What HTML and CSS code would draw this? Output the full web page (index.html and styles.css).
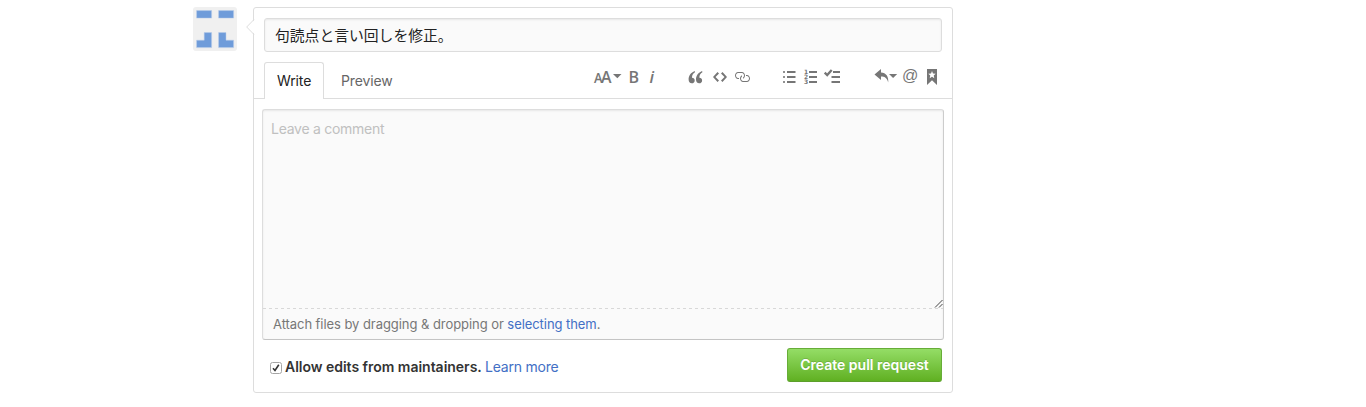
FILE: index.html
```html
<!DOCTYPE html>
<html lang="ja">
<head>
<meta charset="utf-8">
<title>Create pull request</title>
<link rel="stylesheet" href="styles.css">
</head>
<body>
<main class="page">
  <svg class="avatar" width="44" height="44" viewBox="0 0 44 44">
    <g fill="#6f9cda" stroke="#b9cde9" stroke-width=".5">
      <path d="M3.600 3.600h15v7.500h-15zM25.600 3.600h15v7.500h-15z"/>
      <path d="M11.200 25.600h7.400v15h-15v-7.400h7.600zM25.600 25.600H33v7.600h7.600v7.400h-15z"/>
    </g>
  </svg>
  <form class="bubble">
    <svg class="pointer" width="9" height="16" viewBox="0 0 9 16"><path d="M8.5 0v1L1 8l7.500 7v1H9V0z" fill="#fff"/><path d="M8 .5L.7 8 8 15.500" fill="none" stroke="#ddd"/></svg>
    <div class="title-field"><span class="title-text">句読点と言い回しを修正。</span></div>
    <div class="tabnav">
      <div class="tabs">
        <span class="tab selected"><span class="tab-write">Write</span></span>
        <span class="tab"><span class="tab-preview">Preview</span></span>
      </div>
      <div class="toolbar">
        <div class="group">
          <svg width="31" height="16" viewBox="0 0 31 16"><text class="glyph" x="0" y="14" font-size="14" textLength="8.500" lengthAdjust="spacingAndGlyphs">A</text><text class="glyph" x="7" y="14" font-size="16.500" textLength="10.500" lengthAdjust="spacingAndGlyphs">A</text><path d="M19 5h8.500l-4.200 4.200z"/></svg>
          <svg width="18" height="16" viewBox="0 0 18 16"><text class="glyph" x="3.600" y="14" font-size="16">B</text></svg>
          <svg width="17" height="16" viewBox="0 0 17 16"><text class="glyph italic" x="6.500" y="14" font-size="16.500">i</text></svg>
        </div>
        <div class="group quotes">
          <svg width="24" height="16" viewBox="0 0 24 16"><path d="M9.700 2C6 3.700 3.600 6.500 3.600 10.300c0 2.600 1.200 4 3.200 4 1.700 0 2.900-1.200 2.900-2.900S8.600 8.800 7 8.700C6.900 6.300 8 4.400 10 3.300z"/><path transform="translate(7.400)" d="M9.700 2C6 3.700 3.600 6.500 3.600 10.300c0 2.600 1.200 4 3.200 4 1.700 0 2.900-1.200 2.900-2.900S8.600 8.800 7 8.700C6.900 6.300 8 4.400 10 3.300z"/></svg>
          <svg width="22" height="16" viewBox="0 0 22 16"><g transform="translate(4)"><path d="M9.500 3L8 4.500 11.500 8 8 11.500 9.500 13 14 8 9.500 3zm-5 0L0 8l4.500 5L6 11.500 2.500 8 6 4.500 4.500 3z"/></g></svg>
          <svg width="23" height="16" viewBox="0 0 23 16"><g transform="translate(3)"><path d="M4 9h1v1H4c-1.500 0-3-1.690-3-3.500S2.550 3 4 3h4c1.450 0 3 1.690 3 3.500 0 1.410-.910 2.720-2 3.250V8.590c.580-.450 1-1.270 1-2.090C10 5.220 8.980 4 8 4H4c-.980 0-2 1.220-2 2.500S3 9 4 9zm9-3h-1v1h1c1 0 2 1.220 2 2.500S13.980 12 13 12H9c-.980 0-2-1.220-2-2.500 0-.830.420-1.640 1-2.090V6.250c-1.090.530-2 1.840-2 3.250C6 11.310 7.550 13 9 13h4c1.450 0 3-1.690 3-3.500S14.500 6 13 6z"/></g></svg>
        </div>
        <div class="group">
          <svg width="22" height="16" viewBox="0 0 22 16"><path opacity=".8" d="M5 2h2v2H5zm0 5h2v2H5zm0 5h2v2H5z"/><path d="M9 2h8.500v2H9zm0 5h8.500v2H9zm0 5h8.500v2H9z"/></svg>
          <svg width="22" height="16" viewBox="0 0 22 16"><path d="M9 2h8v2H9zm0 5h8v2H9zm0 5h8v2H9z"/><text class="num" x="4" y="5.300">1</text><text class="num" x="4" y="10.300">2</text><text class="num" x="4" y="15.300">3</text></svg>
          <svg width="22" height="16" viewBox="0 0 22 16"><path d="M11 2h7v2h-7zM9.500 7H18v2H9.500zM9.500 12H18v2H9.500z"/><path d="M2.700 3.600L5.200 6l4.500-5" fill="none" stroke="#767676" stroke-width="2.300"/></svg>
        </div>
        <div class="group">
          <svg width="26" height="16" viewBox="0 0 26 16"><path d="M8 0L1.500 5.500 8 11V7.500c3.500 0 6 1 7.200 6C15.800 7.500 13 3.700 8 3.500zM16 5h8.200L20.100 9z"/></svg>
          <svg width="22" height="16" viewBox="0 0 22 16"><text class="at" x="2.900" y="12" textLength="16.400" lengthAdjust="spacingAndGlyphs">@</text></svg>
          <svg width="22" height="16" viewBox="0 0 22 16"><path fill-rule="evenodd" d="M6 0h10v16l-5-4.700L6 16zM11 2.100l-1 2.500-2.700.2L9.300 6.600l-.6 2.600L11 7.800l2.300 1.400-.6-2.600 2-1.800-2.700-.2z"/></svg>
        </div>
      </div>
    </div>
    <div class="editor">
      <div class="comment"><span class="placeholder">Leave a comment</span>
        <svg class="grip" width="9" height="9" viewBox="0 0 9 9"><path d="M1 8.500L8.500 1M5 8.500L8.500 5" stroke="#444" fill="none"/></svg>
      </div>
      <div class="attach"><span class="attach-text">Attach files by dragging &amp; dropping or <a>selecting them</a>.</span></div>
    </div>
    <div class="actions">
      <div class="allow">
        <svg class="check" width="12" height="12" viewBox="0 0 12 12"><rect x=".5" y=".5" width="11" height="11" rx="2" fill="#fff" stroke="#a6a6a6"/><path d="M3 6.200l2 2.300 3.800-5.700" fill="none" stroke="#333" stroke-width="1.600"/></svg>
        <b class="allow-text">Allow edits from maintainers.</b>
        <a class="learn">Learn more</a>
      </div>
      <button class="create" type="button"><span class="create-text">Create pull request</span></button>
    </div>
  </form>
</main>
</body>
</html>
```
FILE: styles.css
```css
* { box-sizing: border-box; }
body {
  margin: 0;
  background: #fff;
  color: #333;
  font: 14px/20px Inter, "Noto Sans CJK JP", sans-serif;
}
.page { display: flex; align-items: flex-start; gap: 16px; padding: 7px 0 0 193px; }
.avatar { flex: none; border-radius: 3px; background: #f0f0f0; }
.bubble {
  position: relative;
  width: 700px;
  height: 386px;
  border: 1px solid #ddd;
  border-radius: 3px;
}
.pointer { position: absolute; left: -8px; top: 11px; }
.title-field {
  height: 34px;
  margin: 10px 10px 0;
  padding: 6px 10px;
  border: 1px solid #ddd;
  border-radius: 3px;
  background: #fafafa;
  box-shadow: inset 0 1px 2px rgba(0, 0, 0, .075);
  white-space: nowrap;
}
.title-text { font: 14.8px/20px "Noto Sans CJK JP", sans-serif; color: #222; }
.tabnav {
  display: flex;
  justify-content: space-between;
  height: 37px;
  margin-top: 10px;
  padding: 0 9px 0 10px;
  border-bottom: 1px solid #ddd;
}
.tabs { display: flex; letter-spacing: -.12px; }
.tab { height: 37px; padding: 8px 12px; color: #666; border: 1px solid transparent; border-bottom: 0; white-space: nowrap; }
.tab.selected { width: 60px; color: #222; background: #fff; border-color: #ddd; border-radius: 3px 3px 0 0; }
.tab + .tab { padding-left: 16px; }
.toolbar { display: flex; gap: 25px; padding-top: 7px; }
.group { display: flex; }
.quotes { margin-right: -1px; }
.group:last-child { margin-left: 4px; }
.toolbar svg { display: block; fill: #767676; overflow: visible; }
.glyph { font-family: "Open Sans", sans-serif; font-weight: 600; }
.italic { font-style: italic; }
.num { font: bold 6px "DejaVu Sans", sans-serif; }
.at { font: 17px "Liberation Sans", sans-serif; }
.editor {
  height: 231px;
  margin: 10px 8px 0;
  border: 1px solid #ddd;
  border-right-color: #ccc;
  border-bottom-color: #c4c4c4;
  border-radius: 3px;
  background: #fafafa;
  box-shadow: inset 0 1px 2px rgba(0, 0, 0, .075);
}
.comment {
  position: relative;
  height: 199px;
  padding: 9px 8px;
  background: repeating-linear-gradient(90deg, #d8d8d8 0 3px, transparent 3px 6px) left bottom / 100% 1px no-repeat;
  color: #c0c0c0;
  letter-spacing: -.27px;
}
.grip { position: absolute; right: 0; bottom: 1px; }
.attach { padding: 5px 10px; color: #777; font-size: 13px; letter-spacing: -.06px; white-space: nowrap; }
.attach a, .learn { color: #426fc5; }
.learn { letter-spacing: -.22px; }
.actions { display: flex; justify-content: space-between; padding: 8px 10px 0 16px; }
.allow { display: flex; align-items: center; height: 20px; margin-top: 9px; white-space: nowrap; }
.check { margin: 2px 3px 0 0; }
.allow-text { width: 196px; margin-right: 4px; font-weight: 600; letter-spacing: -.02px; }
.create {
  width: 155px;
  height: 34px;
  padding: 0;
  border: 1px solid #5ca941;
  border-color: #67ad38 #67ad38 #5c9f2b;
  border-radius: 3px;
  background: linear-gradient(#94dd66, #60b022);
  color: #fff;
  font: 600 14px/20px Inter, sans-serif;
  text-shadow: 0 -1px 0 rgba(0, 0, 0, .15);
  white-space: nowrap;
}
```
